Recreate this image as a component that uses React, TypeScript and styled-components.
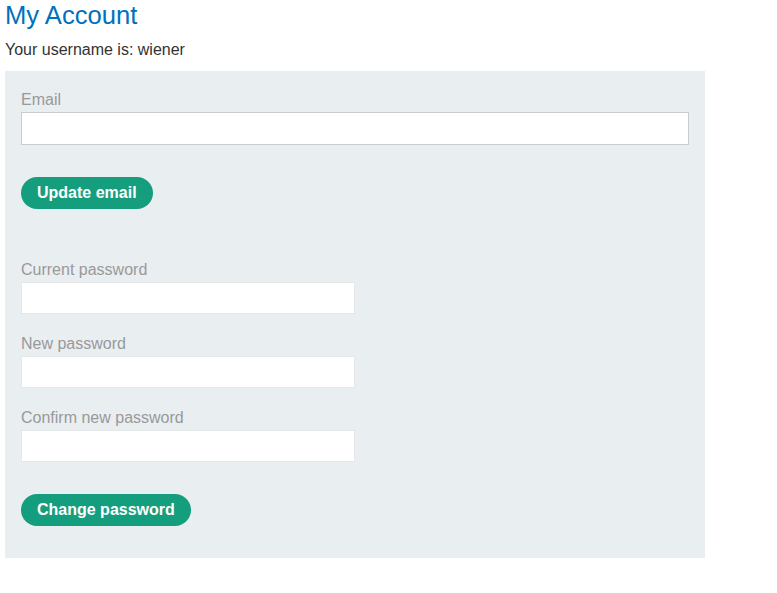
import React from "react";
import styled, { createGlobalStyle } from "styled-components";

const Global = createGlobalStyle`
  html, body { margin: 0; padding: 0; background: #fff; }
  body { font-family: "Liberation Sans", Arial, sans-serif; color: #333; }
`;

const Page = styled.div`
  padding: 0 5px;
  width: 700px;
`;

const Title = styled.h1`
  margin: 0;
  padding-top: 1px;
  font-size: 25.6px;
  font-weight: 400;
  line-height: 28px;
  color: #0071bc;
`;

const Username = styled.p`
  margin: 11px 0 0;
  font-size: 16px;
  line-height: 20px;
  color: #333332;
`;

const Panel = styled.div`
  margin-top: 11px;
  background: #e9eef1;
  padding: 18px 16px 32px;
`;

const Form = styled.form<{ $gapTop?: number }>`
  display: flex;
  flex-direction: column;
  align-items: flex-start;
  margin-top: ${(p) => p.$gapTop ?? 0}px;
`;

const Label = styled.label`
  font-size: 16px;
  line-height: 22px;
  color: #999;
  margin-bottom: 1px;
`;

const Input = styled.input<{ $wide?: boolean }>`
  box-sizing: border-box;
  width: ${(p) => (p.$wide ? "668px" : "334px")};
  height: ${(p) => (p.$wide ? "33px" : "32px")};
  border: 1px solid ${(p) => (p.$wide ? "#c8cccf" : "#e4e6e8")};
  background: #fff;
  margin: 0 0 ${(p) => (p.$wide ? 0 : 19)}px;
  padding: 0 8px;
  font: inherit;
`;

const Button = styled.button`
  margin-top: 32px;
  height: 32px;
  padding: 0 16px;
  border: 0;
  border-radius: 16px;
  background: #159e7e;
  color: #fff;
  font-family: "Liberation Sans", Arial, sans-serif;
  font-size: 16px;
  font-weight: 700;
  cursor: pointer;
`;

const PasswordButton = styled(Button)`
  margin-top: 13px;
`;

export default function App() {
  return (
    <>
      <Global />
      <Page>
        <Title>My Account</Title>
        <Username>Your username is: wiener</Username>
        <Panel>
          <Form>
            <Label>Email</Label>
            <Input $wide type="email" />
            <Button type="button">Update email</Button>
          </Form>
          <Form $gapTop={50}>
            <Label>Current password</Label>
            <Input type="password" />
            <Label>New password</Label>
            <Input type="password" />
            <Label>Confirm new password</Label>
            <Input type="password" />
            <PasswordButton type="button">Change password</PasswordButton>
          </Form>
        </Panel>
      </Page>
    </>
  );
}
